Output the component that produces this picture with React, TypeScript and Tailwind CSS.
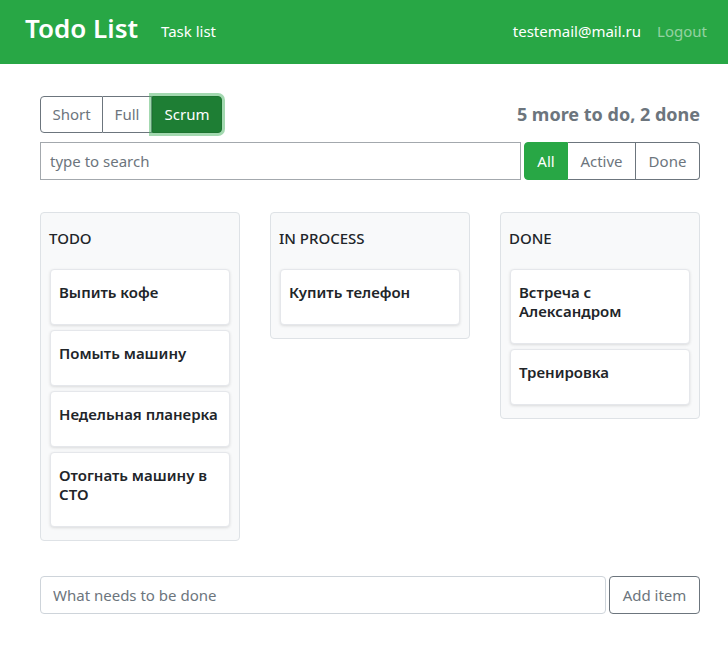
import React from 'react';

const font = { fontFamily: '"Segoe UI", "Noto Sans", "Open Sans", sans-serif' };

const columns = [
  { title: 'TODO', items: ['Выпить кофе', 'Помыть машину', 'Недельная планерка', 'Отогнать машину в СТО'] },
  { title: 'IN PROCESS', items: ['Купить телефон'] },
  { title: 'DONE', items: ['Встреча с Александром', 'Тренировка'] },
];

function Navbar() {
  return (
    <nav className="h-16 bg-[#28a745] flex items-center px-[25px] text-white">
      <span className="text-[26px] font-semibold leading-none mb-[8px]">Todo List</span>
      <span className="ml-[23px] text-[15px] mb-[2px]">Task list</span>
      <span className="ml-auto text-[15px] mb-[2px]">testemail@mail.ru</span>
      <span className="ml-[16px] text-[15px] text-white/50 mr-[-4px] mb-[2px]">Logout</span>
    </nav>
  );
}

function Column({ title, items }: { title: string; items: string[] }) {
  return (
    <div className="bg-[#f8f9fa] border border-[#dee2e6] rounded px-[9px] pt-[18px] pb-[13px]">
      <h3 className="text-[15px] font-medium text-[#212529] leading-none pb-[23px] -ml-px">{title}</h3>
      <div className="flex flex-col gap-[5px]">
        {items.map((t) => (
          <div key={t} className="bg-white border border-[#e5e7eb] rounded shadow-[0_1px_3px_rgba(0,0,0,0.12)] px-[8px] pt-[13px] pb-[22px]">
            <div className="text-[15px] font-semibold text-[#212529] leading-[19px]">{t}</div>
          </div>
        ))}
      </div>
    </div>
  );
}

export default function App() {
  return (
    <div style={font} className="min-h-screen bg-white">
      <Navbar />
      <div className="pl-[40px] pr-[28px] pt-[32px]">
        <div className="flex items-center justify-between h-[37px]">
          <div className="flex text-[15px]">
            <button className="h-[37px] w-[63px] border border-[#6c757d] text-[#6c757d] rounded-l">Short</button>
            <button className="h-[37px] w-[49px] border-y border-r border-[#6c757d] text-[#6c757d]">Full</button>
            <button className="h-[37px] w-[70px] bg-[#1e7e34] border border-[#1c7430] text-white rounded-r shadow-[0_0_0_3px_rgba(72,180,97,0.5)] relative">Scrum</button>
          </div>
          <span className="text-[18px] font-bold text-[#6c757d]">5 more to do, 2 done</span>
        </div>
        <div className="flex mt-[9px] gap-[3px]">
          <input
            className="flex-1 h-[38px] border border-[#a3a8ad] rounded-none px-[9px] text-[15px] placeholder:text-[#6c757d] outline-none"
            placeholder="type to search"
            style={font}
          />
          <div className="flex text-[15px]">
            <button className="h-[38px] w-[44px] bg-[#28a745] border border-[#28a745] text-white rounded-l">All</button>
            <button className="h-[38px] w-[68px] border-y border-r border-[#6c757d] text-[#6c757d]">Active</button>
            <button className="h-[38px] w-[64px] border-y border-r border-[#6c757d] text-[#6c757d] rounded-r">Done</button>
          </div>
        </div>
        <div className="grid grid-cols-3 gap-[30px] mt-[32px] items-start">
          {columns.map((c) => (
            <Column key={c.title} title={c.title} items={c.items} />
          ))}
        </div>
        <div className="flex gap-[3px] mt-[35px]">
          <input
            className="flex-1 h-[38px] border border-[#ced4da] rounded px-[12px] text-[15px] placeholder:text-[#6c757d] outline-none"
            placeholder="What needs to be done"
            style={font}
          />
          <button className="h-[38px] w-[91px] border border-[#6c757d] text-[#6c757d] rounded text-[15px]">Add item</button>
        </div>
      </div>
    </div>
  );
}
